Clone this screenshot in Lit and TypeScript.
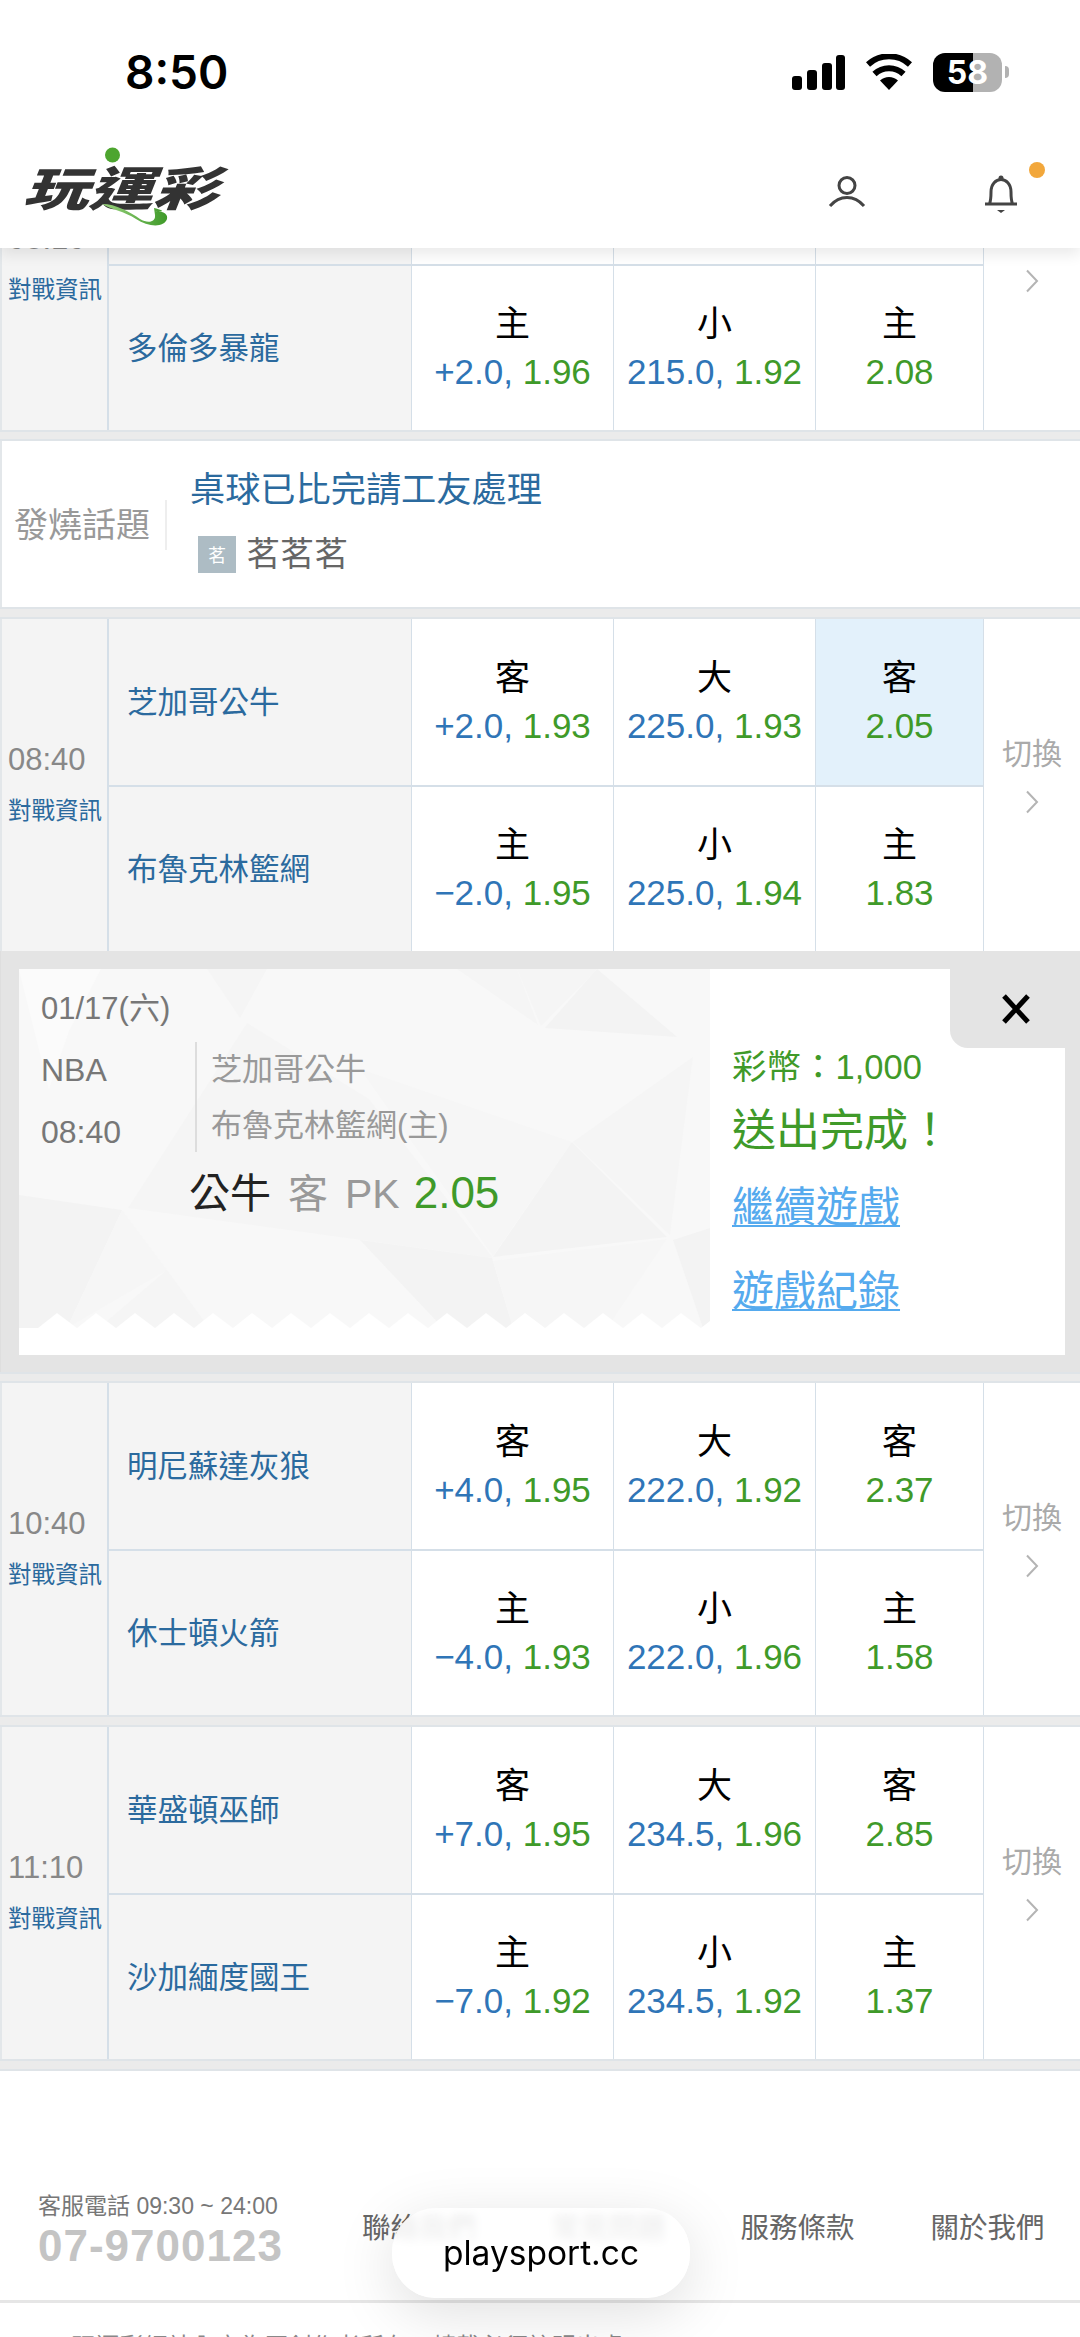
import { LitElement, html, css, svg } from "lit";
import { customElement } from "lit/decorators.js";

interface Cell { top: string; a?: string; b: string; on?: boolean }
interface Row { team: string; cells: Cell[] }
interface Match { time: string; rows: Row[] }

const mk = (time: string, t1: string, t2: string, s1: string, s1o: string, s2: string, s2o: string, tot: string, to1: string, to2: string, m1: string, m2: string, on = false): Match => ({
  time,
  rows: [
    { team: t1, cells: [
      { top: "客", a: s1 + ",", b: s1o },
      { top: "大", a: tot + ",", b: to1 },
      { top: "客", b: m1, on },
    ] },
    { team: t2, cells: [
      { top: "主", a: s2 + ",", b: s2o },
      { top: "小", a: tot + ",", b: to2 },
      { top: "主", b: m2 },
    ] },
  ],
});

const first = mk("08:10", "金州勇士", "多倫多暴龍", "−2.0", "1.94", "+2.0", "1.96", "215.0", "1.92", "1.92", "1.75", "2.08");
const second = mk("08:40", "芝加哥公牛", "布魯克林籃網", "+2.0", "1.93", "−2.0", "1.95", "225.0", "1.93", "1.94", "2.05", "1.83", true);
const rest = [
  mk("10:40", "明尼蘇達灰狼", "休士頓火箭", "+4.0", "1.95", "−4.0", "1.93", "222.0", "1.92", "1.96", "2.37", "1.58"),
  mk("11:10", "華盛頓巫師", "沙加緬度國王", "+7.0", "1.95", "−7.0", "1.92", "234.5", "1.96", "1.92", "2.85", "1.37"),
];

const shapes: [string, string][] = [
  ["0,0 82,0 50,62 30,120", "#fbfbfb"],
  ["188,0 221,49 248,0", "#f5f5f5"],
  ["228,54 109,239 474,289 350,130", "#f5f5f5"],
  ["341,100 553,173 474,287", "#f6f6f6"],
  ["0,226 103,241 48,359 0,359", "#f3f3f3"],
  ["103,241 148,301 48,359", "#f6f6f6"],
  ["148,301 80,359 190,359", "#f5f5f5"],
  ["341,271 473,289 494,359 424,359", "#f3f3f3"],
  ["474,292 648,270 588,359 494,359", "#f6f6f6"],
  ["553,173 474,288 648,268", "#f3f3f3"],
  ["526,59 578,0 658,68", "#f3f3f3"],
  ["498,0 578,0 522,57", "#f5f5f5"],
  ["438,0 498,0 519,56", "#f5f5f5"],
  ["554,173 674,88 651,266", "#f5f5f5"],
  ["654,271 691,259 691,359 684,359", "#f3f3f3"],
];

@customElement("app-root")
export class AppRoot extends LitElement {
  static styles = css`
    :host {
      display: block;
      position: relative;
      width: 1080px;
      height: 2337px;
      overflow: hidden;
      background: #fff;
      font-family: "Liberation Sans", "Noto Sans CJK TC", sans-serif;
      font-weight: 400;
    }
    .head {
      position: relative;
      z-index: 2;
      height: 248px;
      background: #fff;
      box-shadow: 0 6px 14px rgba(0, 0, 0, 0.09);
    }
    .status {
      height: 140px;
      display: flex;
      align-items: flex-start;
      justify-content: space-between;
      box-sizing: border-box;
      padding: 50px 78px 0 125px;
    }
    .clock {
      font-family: Inter, sans-serif;
      font-weight: 600;
      font-size: 46px;
      line-height: 44px;
      color: #000;
    }
    .sys { display: flex; align-items: center; gap: 21px; height: 44px; }
    .batt {
      position: relative;
      width: 69px;
      height: 39px;
      border-radius: 12px;
      overflow: hidden;
      background: linear-gradient(90deg, #000 58%, #b2b2b2 58%);
      color: #fff;
      font-family: Inter, sans-serif;
      font-weight: 700;
      font-size: 32px;
      line-height: 39px;
      text-align: center;
    }
    .battwrap { display: flex; align-items: center; gap: 3px; margin-right: -7px; }
    .nub { width: 4px; height: 12px; background: #b2b2b2; border-radius: 0 4px 4px 0; }
    .nav { height: 108px; position: relative; display: flex; }
    .logo {
      position: relative;
      margin-left: 26px;
      width: 210px;
      height: 108px;
    }
    .logotext {
      position: absolute;
      left: 0;
      top: 14px;
      width: 204px;
      text-align: center;
      font-family: "Noto Sans CJK TC", sans-serif;
      font-weight: 900;
      font-size: 47px;
      line-height: 64px;
      color: #333;
      white-space: nowrap;
      transform: scaleX(1.38) skewX(-16deg);
    }
    .logosvg { position: absolute; left: 0; top: 0; }
    .navicon { position: absolute; top: 0; left: 0; }
    main { margin-top: -150px; }
    .band {
      height: 11px;
      box-sizing: border-box;
      background: #ebebeb;
      border-top: 2px solid #dfe4e8;
      border-bottom: 2px solid #dfe4e8;
    }
    .band.big { height: 12px; }
    .match {
      display: grid;
      grid-template-columns: 109px 303px 202px 202px 168px 96px;
      grid-template-rows: 166px 166px;
      background: #fff;
    }
    .time {
      grid-row: 1 / 3;
      background: #f4f4f4;
      border-left: 2px solid #e3e7ea;
      border-right: 2px solid #d5dfe8;
      display: flex;
      flex-direction: column;
      justify-content: center;
      box-sizing: border-box;
      padding-left: 6px;
      white-space: nowrap;
    }
    .clockt { font-size: 31px; line-height: 40px; color: #888; margin-bottom: 11px; }
    .info { font-size: 23.5px; line-height: 40px; color: #2b6a9e; margin-right: -4px; }
    .team {
      grid-column: 2;
      background: #f4f4f4;
      color: #2b6a9e;
      font-size: 30.5px;
      display: flex;
      align-items: center;
      padding: 0 0 4px 18px;
      border-right: 1px solid #d5dfe8;
      box-sizing: border-box;
      white-space: nowrap;
    }
    .second { border-top: 2px solid #d5dfe8; }
    .odds {
      border-right: 1px solid #d5dfe8;
      box-sizing: border-box;
      display: flex;
      flex-direction: column;
      align-items: center;
      justify-content: center;
      white-space: nowrap;
    }
    .odds.on { background: #e3f1fb; }
    .top { font-size: 35px; line-height: 48px; color: #000; }
    .num { font-size: 35px; line-height: 48px; }
    .blue { color: #2f75b7; }
    .green { color: #3f9a29; }
    .switch {
      grid-column: 6;
      grid-row: 1 / 3;
      display: flex;
      flex-direction: column;
      align-items: center;
      justify-content: center;
      color: #aaa;
      font-size: 30px;
      line-height: 40px;
      padding-bottom: 22px;
      box-sizing: border-box;
      gap: 16px;
    }
    .switch svg { display: block; }
    .hot {
      height: 166px;
      box-sizing: border-box;
      border-left: 2px solid #e3e7ea;
      display: flex;
      align-items: center;
      background: #fff;
    }
    .hotlabel {
      width: 150px;
      box-sizing: border-box;
      padding-left: 12px;
      font-size: 34px;
      line-height: 50px;
      color: #999;
      white-space: nowrap;
      margin-top: 2px;
    }
    .hotbody {
      border-left: 2px solid #eee;
      height: 50px;
      box-sizing: border-box;
      margin-left: 13px;
      margin-top: 2px;
      padding: 0 0 8px 23px;
      display: flex;
      flex-direction: column;
      justify-content: center;
      gap: 16px;
    }
    .hottitle { font-size: 35.2px; line-height: 50px; color: #2b6a9e; white-space: nowrap; }
    .byline { display: flex; align-items: center; gap: 10px; padding-left: 8px; height: 46px; }
    .ava {
      width: 38px;
      height: 37px;
      background: #adbcc4;
      color: #fff;
      font-size: 18px;
      display: flex;
      align-items: center;
      justify-content: center;
    }
    .byname { font-size: 34px; color: #666; line-height: 46px; }
    .panel {
      height: 421px;
      box-sizing: border-box;
      padding: 18px 15px 17px 19px;
      background: #e4e4e4;
      border-left: 1px solid #dedede;
    }
    .ticket {
      position: relative;
      height: 386px;
      margin-left: -1px;
      background: #fff;
      display: grid;
      grid-template-columns: 691px 355px;
    }
    .left { position: relative; padding: 20px 0 0 22px; box-sizing: border-box; color: #777; }
    .pattern { position: absolute; left: 0; top: 0; }
    .left > div { position: relative; }
    .date { font-size: 31px; line-height: 40px; }
    .lines { display: flex; align-items: flex-start; margin-top: 13px; height: 118px; }
    .meta { width: 154px; display: flex; flex-direction: column; gap: 6px; font-size: 32px; line-height: 56px; }
    .names {
      border-left: 2px solid #ddd;
      height: 110px;
      padding-left: 14px;
      font-size: 31px;
      line-height: 56px;
      color: #999;
      white-space: nowrap;
    }
    .pick {
      margin: 3px 0 0 148px;
      font-size: 40px;
      line-height: 60px;
      color: #999;
      display: flex;
      align-items: baseline;
      white-space: nowrap;
    }
    .pick b { font-weight: 400; font-size: 41px; color: #222; margin-right: 17px; }
    .pick i { font-style: normal; font-size: 41px; margin-left: 17px; }
    .pick em { font-style: normal; font-size: 44px; margin-left: 14px; color: #3f9a29; }
    .right { padding: 73px 0 0 22px; box-sizing: border-box; white-space: nowrap; }
    .coins { font-size: 34.5px; line-height: 50px; color: #3f9a29; }
    .done { font-size: 44px; line-height: 60px; color: #3f9a29; margin-top: 9px; }
    .link {
      display: block;
      font-size: 42px;
      line-height: 60px;
      color: #55aaee;
      text-decoration: underline;
      text-decoration-thickness: 2px;
      text-underline-offset: 3px;
    }
    .l1 { margin-top: 17px; }
    .l2 { margin-top: 24px; }
    .close {
      position: absolute;
      right: 0;
      top: 0;
      width: 115px;
      height: 79px;
      background: #e4e4e4;
      border-bottom-left-radius: 18px;
      display: flex;
      align-items: center;
      justify-content: center;
      padding-left: 16px;
      box-sizing: border-box;
    }
    .foot {
      height: 232px;
      box-sizing: border-box;
      padding: 120px 0 0 38px;
      display: flex;
      white-space: nowrap;
      border-bottom: 3px solid #e6e6e6;
    }
    .contact { width: 324px; flex: none; }
    .svc { font-size: 23px; line-height: 30px; color: #777; }
    .tel { font-size: 44px; font-weight: 700; line-height: 50px; letter-spacing: 1px; color: #c4c4c4; }
    .links { flex: none; display: grid; grid-template-columns: 189.5px 189px 190px 113px; padding-top: 22px; height: 30px; font-size: 28.5px; line-height: 30px; color: #666; }
    .legal { margin: 29px 0 0 41px; font-size: 24px; line-height: 30px; color: #888; white-space: nowrap; }
    .pill {
      position: absolute;
      z-index: 3;
      left: 392px;
      top: 2208px;
      width: 298px;
      height: 90px;
      border-radius: 44px;
      background: rgba(255, 255, 255, 0.86);
      backdrop-filter: blur(5px);
      box-shadow: 0 14px 60px rgba(0, 0, 0, 0.13);
      display: flex;
      align-items: center;
      justify-content: center;
      box-sizing: border-box;
      font-family: Inter, sans-serif;
      font-size: 33.5px;
      color: #000;
    }
  `;

  private chevron() {
    return html`<svg width="14" height="24" viewBox="0 0 14 24"><path d="M2 1.5 L12 12 L2 22.5" fill="none" stroke="#b4b4b4" stroke-width="2"></path></svg>`;
  }

  private match(m: Match) {
    return html`<section class="match">
      <div class="time"><span class="clockt">${m.time}</span><span class="info">對戰資訊</span></div>
      ${m.rows.map((r, i) => html`
        <div class="team ${i ? "second" : ""}">${r.team}</div>
        ${r.cells.map((c) => html`<div class="odds ${i ? "second" : ""} ${c.on ? "on" : ""}">
          <div class="top">${c.top}</div>
          <div class="num">${c.a ? html`<span class="blue">${c.a}</span> ` : ""}<span class="green">${c.b}</span></div>
        </div>`)}
      `)}
      <div class="switch"><span>切換</span>${this.chevron()}</div>
    </section>`;
  }

  private ticket() {
    return html`<section class="panel">
      <div class="ticket">
        <div class="left">
          <svg class="pattern" width="691" height="359" viewBox="0 0 691 359">
            <rect width="691" height="359" fill="#f8f8f8"></rect>
            ${shapes.map(([p, f]) => svg`<polygon points=${p} fill=${f}></polygon>`)}
            ${Array.from({ length: 18 }, (_, i) => svg`<polygon points=${`${19 + i * 39},359 ${38 + i * 39},344 ${58 + i * 39},359`} fill="#fff"></polygon>`)}
          </svg>
          <div class="date">01/17(六)</div>
          <div class="lines">
            <div class="meta"><span>NBA</span><span>08:40</span></div>
            <div class="names">芝加哥公牛<br />布魯克林籃網(主)</div>
          </div>
          <div class="pick"><b>公牛</b>客<i>PK</i><em>2.05</em></div>
        </div>
        <div class="right">
          <div class="coins">彩幣：1,000</div>
          <div class="done">送出完成！</div>
          <a class="link l1">繼續遊戲</a>
          <a class="link l2">遊戲紀錄</a>
        </div>
        <div class="close">
          <svg width="30" height="30" viewBox="0 0 30 30"><path d="M3 2 L27 28 M27 2 L3 28" stroke="#000" stroke-width="5" fill="none"></path></svg>
        </div>
      </div>
    </section>`;
  }

  render() {
    return html`
      <header class="head">
        <div class="status">
          <div class="clock">8:50</div>
          <div class="sys">
            <svg width="53" height="35" viewBox="0 0 53 35" fill="#000">
              <rect x="0" y="21" width="10" height="14" rx="3"></rect>
              <rect x="15" y="15" width="10" height="20" rx="3"></rect>
              <rect x="30" y="8" width="10" height="27" rx="3"></rect>
              <rect x="44" y="0" width="9" height="35" rx="3"></rect>
            </svg>
            <svg width="46" height="36" viewBox="0 0 46 36">
              <path d="M23 36 L14 26.5 A13 13 0 0 1 32 26.5 Z" fill="#000"></path>
              <path d="M8.5 20 A21 21 0 0 1 37.5 20" fill="none" stroke="#000" stroke-width="6"></path>
              <path d="M2 10.5 A31 31 0 0 1 44 10.5" fill="none" stroke="#000" stroke-width="6"></path>
            </svg>
            <div class="battwrap"><div class="batt">58</div><div class="nub"></div></div>
          </div>
        </div>
        <div class="nav">
          <div class="logo">
            <div class="logotext">玩運彩</div>
            <svg class="logosvg" width="210" height="108" viewBox="0 0 210 108">
              <defs><linearGradient id="sw" x1="0" x2="1" y1="0" y2="0"><stop offset="0" stop-color="#9ad27e"></stop><stop offset="1" stop-color="#3f9a29"></stop></linearGradient></defs>
              <circle cx="86.5" cy="15" r="7.5" fill="#4da52f"></circle>
              <path d="M76 64 C90 64 104 72 114 79 C122 84 130 82 129 75 L128 68 C136 70 141 72 129 71 C139 71 142 75 141 79 C138 88 122 87 110 79 C98 71 86 70 76 64 Z" fill="url(#sw)"></path>
            </svg>
          </div>
          <svg class="navicon" width="1080" height="108" viewBox="0 140 1080 108">
            <circle cx="847" cy="185.5" r="8" fill="none" stroke="#444" stroke-width="3"></circle>
            <path d="M830 206 C836 199 842 197.5 847 197.5 C852 197.5 858 199 864 206" fill="none" stroke="#444" stroke-width="3"></path>
            <path d="M985 204 H1017 M989.500 204 C991 200 991 196 991 192 C991 184 996 179.500 1001 179.500 C1006 179.500 1011 184 1011 192 C1011 196 1011 200 1012.500 204" fill="none" stroke="#444" stroke-width="3"></path>
            <circle cx="1001" cy="178" r="2.500" fill="#444"></circle>
            <path d="M997 210 H1005 L1001 213 Z" fill="#444"></path>
            <circle cx="1037" cy="170" r="8" fill="#f2a73b"></circle>
          </svg>
        </div>
      </header>
      <main>
        ${this.match(first)}
        <div class="band"></div>
        <section class="hot">
          <div class="hotlabel">發燒話題</div>
          <div class="hotbody">
            <div class="hottitle">桌球已比完請工友處理</div>
            <div class="byline"><span class="ava">茗</span><span class="byname">茗茗茗</span></div>
          </div>
        </section>
        <div class="band big"></div>
        ${this.match(second)}
        ${this.ticket()}
        <div class="band"></div>
        ${this.match(rest[0])}
        <div class="band big"></div>
        ${this.match(rest[1])}
        <div class="band big"></div>
        <footer class="foot">
          <div class="contact">
            <div class="svc">客服電話 09:30 ~ 24:00</div>
            <div class="tel">07-9700123</div>
          </div>
          <div class="links"><span>聯絡我們</span><span>常見問題</span><span>服務條款</span><span>關於我們</span></div>
        </footer>
        <div class="legal">※ 玩運彩網站內容為原創作者所有，轉載必須註明出處</div>
      </main>
      <div class="pill">playsport.cc</div>
    `;
  }
}
